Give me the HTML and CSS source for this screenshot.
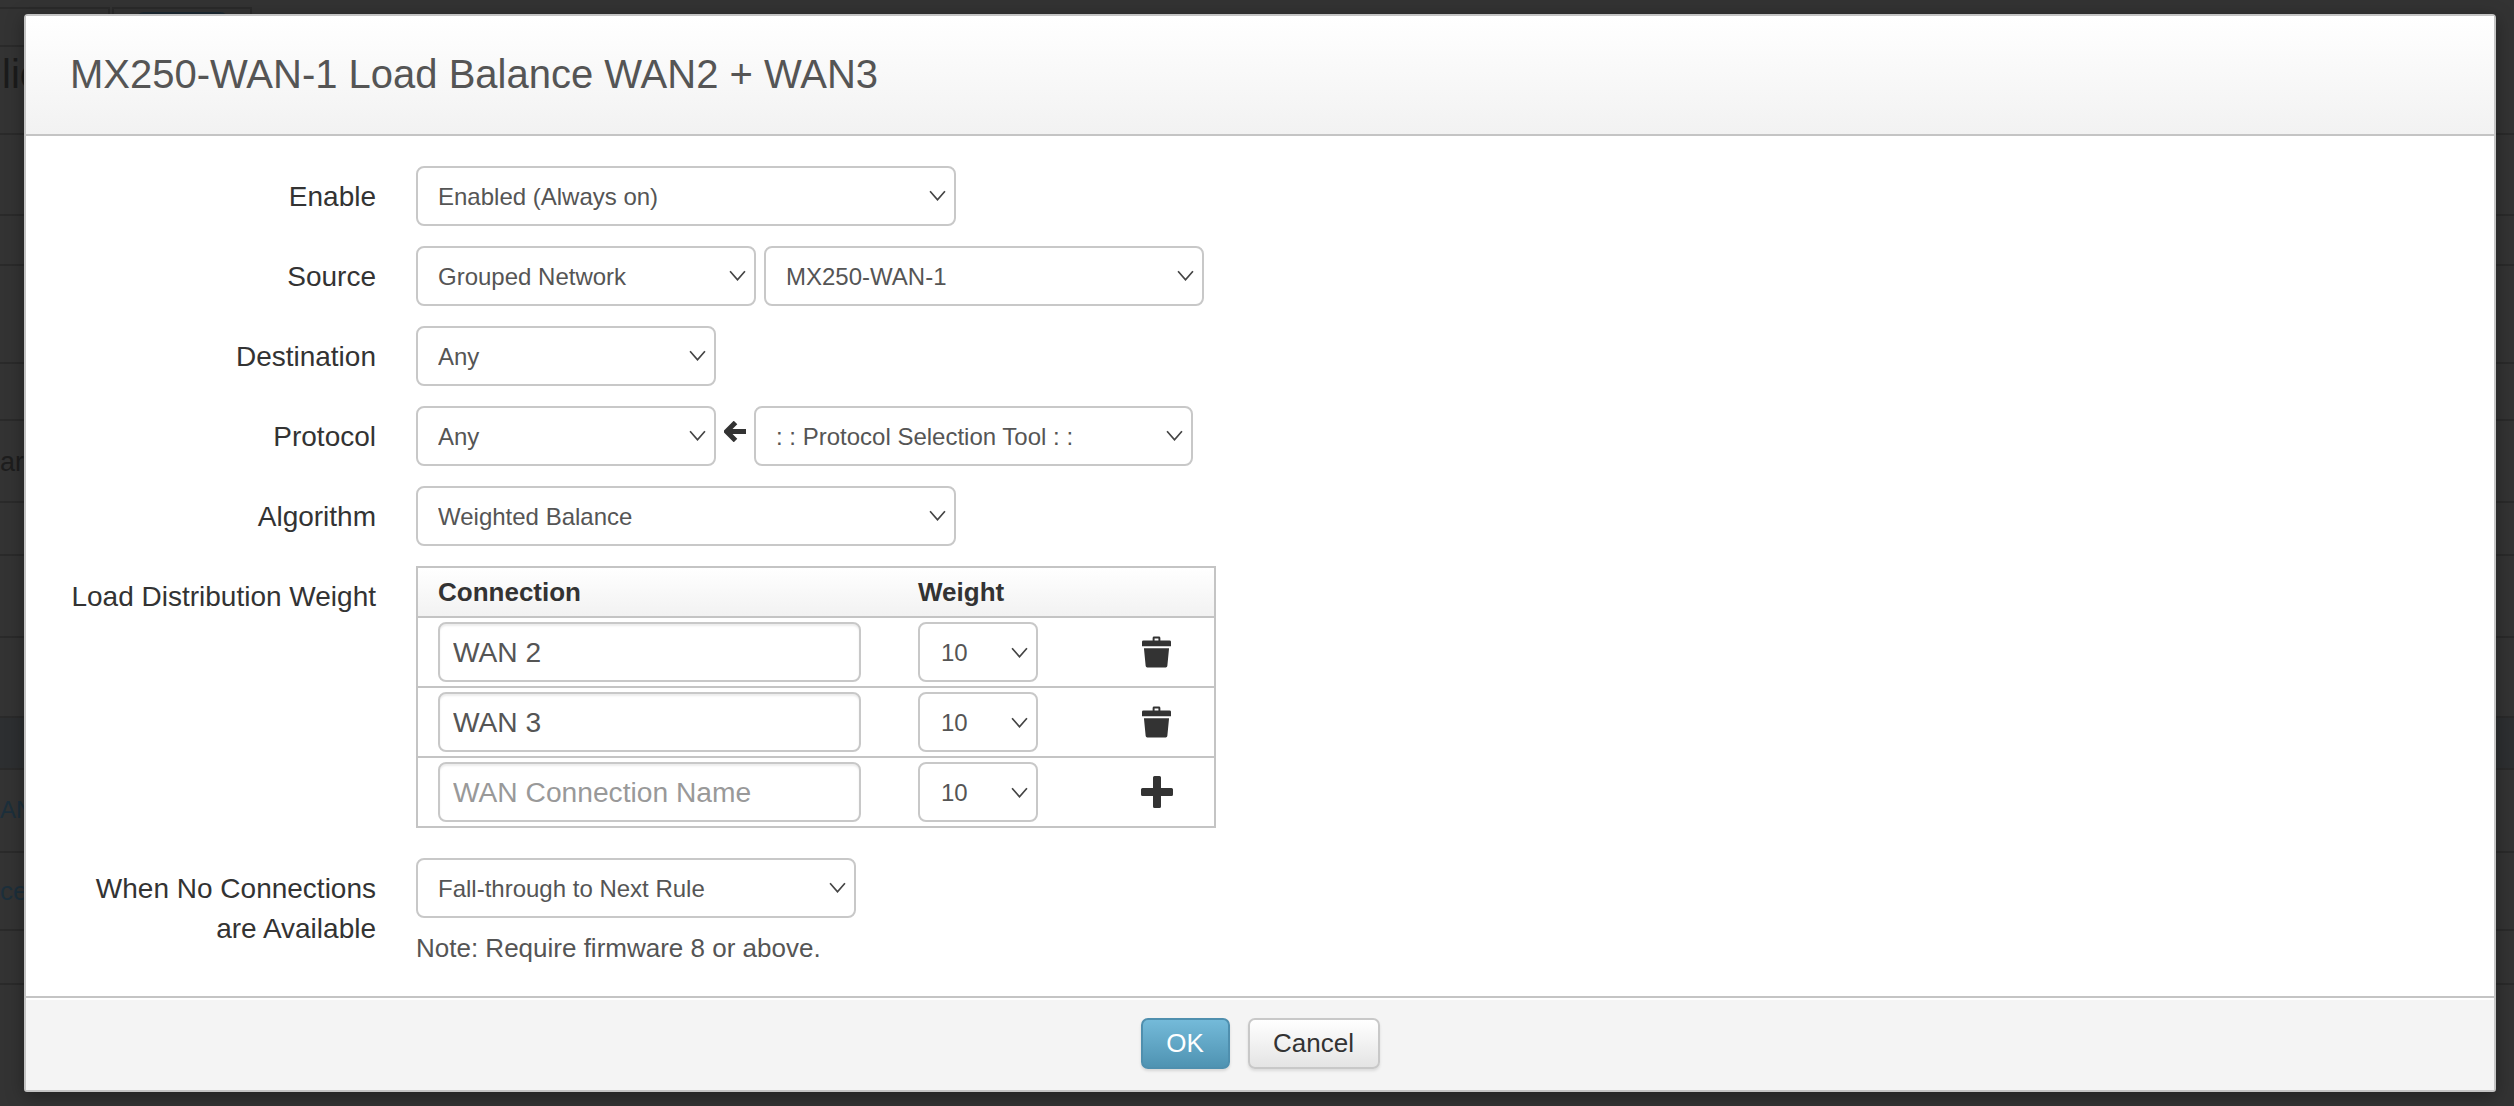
FILE: index.html
```html
<!DOCTYPE html>
<html lang="en">
<head>
<meta charset="utf-8">
<title>MX250-WAN-1 Load Balance WAN2 + WAN3</title>
<link rel="stylesheet" href="styles.css">
</head>
<body>
<div class="page">
  <div class="tabs"><span class="tab tab-a"></span><span class="tab tab-b"><span class="pill"></span></span></div>
  <div class="bg-row h121"><span class="bg-title">lic</span></div>
  <div class="bg-row h81"></div>
  <div class="bg-row h50"></div>
  <div class="bg-row h98"></div>
  <div class="bg-row h57"></div>
  <div class="bg-row h82"><span class="bg-text">are</span></div>
  <div class="bg-row h53"></div>
  <div class="bg-row h82"></div>
  <div class="bg-row h80"></div>
  <div class="bg-row h52 bg-dark"></div>
  <div class="bg-row h83"><span class="bg-link bg-link-a">AN</span></div>
  <div class="bg-row h78"><span class="bg-link bg-link-b">ce</span></div>
  <div class="bg-row h54"></div>
</div>

<div class="modal">
  <header class="modal-header"><h3 class="modal-title">MX250-WAN-1 Load Balance WAN2 + WAN3</h3></header>
  <div class="modal-body">
    <div class="form-row">
      <label class="form-label">Enable</label>
      <div class="controls">
        <span class="select w540"><select><option>Enabled (Always on)</option></select><svg class="chev" viewBox="0 0 16 10"><path d="M1 1l7 8 7-8"/></svg></span>
      </div>
    </div>
    <div class="form-row">
      <label class="form-label">Source</label>
      <div class="controls">
        <span class="select w340"><select><option>Grouped Network</option></select><svg class="chev" viewBox="0 0 16 10"><path d="M1 1l7 8 7-8"/></svg></span>
        <span class="select w440"><select><option>MX250-WAN-1</option></select><svg class="chev" viewBox="0 0 16 10"><path d="M1 1l7 8 7-8"/></svg></span>
      </div>
    </div>
    <div class="form-row">
      <label class="form-label">Destination</label>
      <div class="controls">
        <span class="select w300"><select><option>Any</option></select><svg class="chev" viewBox="0 0 16 10"><path d="M1 1l7 8 7-8"/></svg></span>
      </div>
    </div>
    <div class="form-row">
      <label class="form-label">Protocol</label>
      <div class="controls">
        <span class="select w300"><select><option>Any</option></select><svg class="chev" viewBox="0 0 16 10"><path d="M1 1l7 8 7-8"/></svg></span>
        <svg class="arrow" viewBox="0 0 23 21"><path d="M11.500 1.500L2.500 10.500l9 9M3.500 10.500H22"/></svg>
        <span class="select w439"><select><option>: : Protocol Selection Tool : :</option></select><svg class="chev" viewBox="0 0 16 10"><path d="M1 1l7 8 7-8"/></svg></span>
      </div>
    </div>
    <div class="form-row">
      <label class="form-label">Algorithm</label>
      <div class="controls">
        <span class="select w540"><select><option>Weighted Balance</option></select><svg class="chev" viewBox="0 0 16 10"><path d="M1 1l7 8 7-8"/></svg></span>
      </div>
    </div>
    <div class="form-row form-row-table">
      <label class="form-label">Load Distribution Weight</label>
      <div class="controls">
        <table class="weights">
          <thead>
            <tr><th class="c-name">Connection</th><th class="c-weight">Weight</th><th class="c-action"></th></tr>
          </thead>
          <tbody>
            <tr>
              <td><input class="text-input" type="text" value="WAN 2"></td>
              <td><span class="select w120"><select><option>10</option></select><svg class="chev" viewBox="0 0 16 10"><path d="M1 1l7 8 7-8"/></svg></span></td>
              <td class="action"><svg class="trash" viewBox="0 0 30 32"><path d="M11 4V1.500A1.500 1.500 0 0 1 12.500 0h5A1.500 1.500 0 0 1 19 1.500V4h9.500A1.500 1.500 0 0 1 30 5.500V10H0V5.500A1.500 1.500 0 0 1 1.500 4zM13 4h4V2h-4zM2 12h26l-1.800 18.500A1.700 1.700 0 0 1 24.500 32h-19a1.700 1.700 0 0 1-1.700-1.500z"/></svg></td>
            </tr>
            <tr>
              <td><input class="text-input" type="text" value="WAN 3"></td>
              <td><span class="select w120"><select><option>10</option></select><svg class="chev" viewBox="0 0 16 10"><path d="M1 1l7 8 7-8"/></svg></span></td>
              <td class="action"><svg class="trash" viewBox="0 0 30 32"><path d="M11 4V1.500A1.500 1.500 0 0 1 12.500 0h5A1.500 1.500 0 0 1 19 1.500V4h9.500A1.500 1.500 0 0 1 30 5.500V10H0V5.500A1.500 1.500 0 0 1 1.500 4zM13 4h4V2h-4zM2 12h26l-1.800 18.500A1.700 1.700 0 0 1 24.500 32h-19a1.700 1.700 0 0 1-1.700-1.500z"/></svg></td>
            </tr>
            <tr>
              <td><input class="text-input" type="text" placeholder="WAN Connection Name"></td>
              <td><span class="select w120"><select><option>10</option></select><svg class="chev" viewBox="0 0 16 10"><path d="M1 1l7 8 7-8"/></svg></span></td>
              <td class="action"><svg class="plus" viewBox="0 0 32 32"><path d="M13.500 0h5A1.500 1.500 0 0 1 20 1.500V12h10.500A1.500 1.500 0 0 1 32 13.500v5a1.500 1.500 0 0 1-1.500 1.500H20v10.500a1.500 1.500 0 0 1-1.500 1.500h-5a1.500 1.500 0 0 1-1.500-1.500V20H1.500A1.500 1.500 0 0 1 0 18.500v-5A1.500 1.500 0 0 1 1.500 12H12V1.500A1.500 1.500 0 0 1 13.500 0z"/></svg></td>
            </tr>
          </tbody>
        </table>
      </div>
    </div>
    <div class="form-row form-row-last">
      <label class="form-label">When No Connections are Available</label>
      <div class="controls controls-stack">
        <span class="select w440"><select><option>Fall-through to Next Rule</option></select><svg class="chev" viewBox="0 0 16 10"><path d="M1 1l7 8 7-8"/></svg></span>
        <p class="note">Note: Require firmware 8 or above.</p>
      </div>
    </div>
  </div>
  <footer class="modal-footer">
    <button class="btn btn-primary" type="button">OK</button>
    <button class="btn btn-default" type="button">Cancel</button>
  </footer>
</div>
</body>
</html>
```

FILE: styles.css
```css
* { box-sizing: border-box; }
html, body { margin: 0; height: 100%; overflow: hidden; }
body {
  background: #333;
  font-family: "Liberation Sans", Arial, sans-serif;
  color: #333;
}

/* dimmed page behind the dialog */
.page { display: flex; flex-direction: column; height: 1106px; background: #333; }
.tabs { display: flex; height: 14px; padding-top: 7px; gap: 2px; flex: none; }
.tab { display: block; height: 40px; border: 2px solid #2a2a2a; border-left: 0; }
.tab-a { width: 110px; }
.tab-b { width: 140px; padding: 3px 22px 0; border-left: 2px solid #2a2a2a; }
.pill { display: block; height: 30px; background: #1c2a33; border-radius: 8px; }
.bg-row { flex: none; width: 100%; border-bottom: 2px solid #2a2a2a; overflow: hidden; white-space: nowrap; display: flex; }
.bg-dark { background: #2d2f31; }
.h121 { height: 121px; }
.h81 { height: 81px; }
.h50 { height: 50px; }
.h98 { height: 98px; }
.h57 { height: 57px; }
.h82 { height: 82px; }
.h53 { height: 53px; }
.h80 { height: 80px; }
.h52 { height: 52px; }
.h83 { height: 83px; }
.h78 { height: 78px; }
.h54 { height: 54px; }
.bg-title { padding: 38px 0 0 2px; font-size: 40px; color: #1b1b1b; }
.bg-text { padding-top: 26px; font-size: 27px; color: #1d1d1d; }
.bg-link { color: #1c2f3b; }
.bg-link-a { padding-top: 26px; font-size: 24px; }
.bg-link-b { padding-top: 23px; font-size: 26px; }

/* dialog */
.modal {
  position: absolute;
  left: 24px;
  top: 14px;
  width: 2472px;
  height: 1078px;
  display: flex;
  flex-direction: column;
  background: #fff;
  border: 2px solid #c4c4c4;
  border-radius: 4px 4px 3px 3px;
  box-shadow: 0 4px 18px rgba(0,0,0,.35);
}
.modal-header {
  flex: none;
  height: 120px;
  padding: 0 44px 2px;
  display: flex;
  align-items: center;
  background: linear-gradient(#fff, #f2f2f2);
  border-bottom: 2px solid #c4c4c4;
}
.modal-title { margin: 0; font-size: 40px; font-weight: 400; color: #555; }
.modal-body { flex: 1; padding: 30px 0 0; }
.form-row { display: grid; grid-template-columns: 350px 1fr; column-gap: 40px; min-height: 60px; margin-bottom: 20px; }
.form-row-table { margin-bottom: 30px; }
.form-row-last { margin-bottom: 0; }
.form-label { padding-top: 11px; text-align: right; font-size: 28px; line-height: 40px; color: #333; }
.form-row-last .form-label { padding: 11px 0 0 40px; }
.controls { display: flex; align-items: flex-start; gap: 8px; }
.controls-stack { flex-direction: column; gap: 0; }

.select { position: relative; display: block; height: 60px; flex: none; }
.select select {
  appearance: none;
  -webkit-appearance: none;
  display: block;
  width: 100%;
  height: 100%;
  padding: 0 40px 0 20px;
  background: #fff;
  border: 2px solid #c8c8c8;
  border-radius: 8px;
  font: 24px "Liberation Sans", Arial, sans-serif;
  color: #555;
}
.chev { position: absolute; right: 10px; top: 24px; width: 17px; height: 11px; pointer-events: none; }
.chev path { fill: none; stroke: #444; stroke-width: 1.600; }
.w540 { width: 540px; }
.w340 { width: 340px; }
.w440 { width: 440px; }
.w300 { width: 300px; }
.w439 { width: 439px; }
.w120 { width: 120px; }
.arrow { flex: none; width: 23px; height: 21px; margin: 15px -1px 0 0; }
.arrow path { fill: none; stroke: #333; stroke-width: 5; }

.weights { width: 800px; table-layout: fixed; border-collapse: collapse; }
.weights th, .weights td { border-top: 2px solid #c4c4c4; border-bottom: 2px solid #c4c4c4; padding: 0 0 0 20px; height: 70px; vertical-align: middle; }
.weights th:first-child, .weights td:first-child { border-left: 2px solid #c4c4c4; }
.weights th:last-child, .weights td:last-child { border-right: 2px solid #c4c4c4; }
.weights th { height: 50px; text-align: left; font-size: 26px; color: #333; background: linear-gradient(#fff, #f2f2f2); }
.c-name { width: 481px; }
.c-action { width: 118px; }
.weights td.action { padding: 0 0 0 2px; text-align: center; }
.trash { display: inline-block; vertical-align: middle; width: 29px; height: 32px; fill: #333; }
.plus { display: inline-block; vertical-align: middle; width: 32px; height: 32px; fill: #333; }
.text-input {
  display: block;
  width: 423px;
  height: 60px;
  padding: 0 13px;
  background: #fff;
  border: 2px solid #c8c8c8;
  border-radius: 8px;
  box-shadow: inset 0 2px 2px rgba(0,0,0,.08);
  font: 28.200px "Liberation Sans", Arial, sans-serif;
  color: #555;
}
.text-input::placeholder { color: #999; opacity: 1; }
.weights .select select { padding-left: 21px; }
.weights .chev { top: 25px; }
.note { margin: 12px 0 0; font-size: 26px; line-height: 36px; color: #555; }

.modal-footer {
  flex: none;
  height: 94px;
  padding: 20px 0 0;
  display: flex;
  justify-content: center;
  gap: 18px;
  background: #f4f4f4;
  border-top: 2px solid #c4c4c4;
  box-shadow: inset 0 2px 0 #fff;
}
.btn { height: 51px; border-radius: 7px; font: 26px "Liberation Sans", Arial, sans-serif; padding: 0; }
.btn-primary {
  width: 89px;
  color: #fff;
  background: linear-gradient(#74bad9, #4f93b2);
  border: 2px solid #4f8fae;
  box-shadow: 0 2px 3px rgba(0,0,0,.12);
}
.btn-default {
  width: 132px;
  color: #333;
  background: linear-gradient(#fff, #e4e4e4);
  border: 2px solid #c8c8c8;
  box-shadow: 0 2px 3px rgba(0,0,0,.1);
}
```
